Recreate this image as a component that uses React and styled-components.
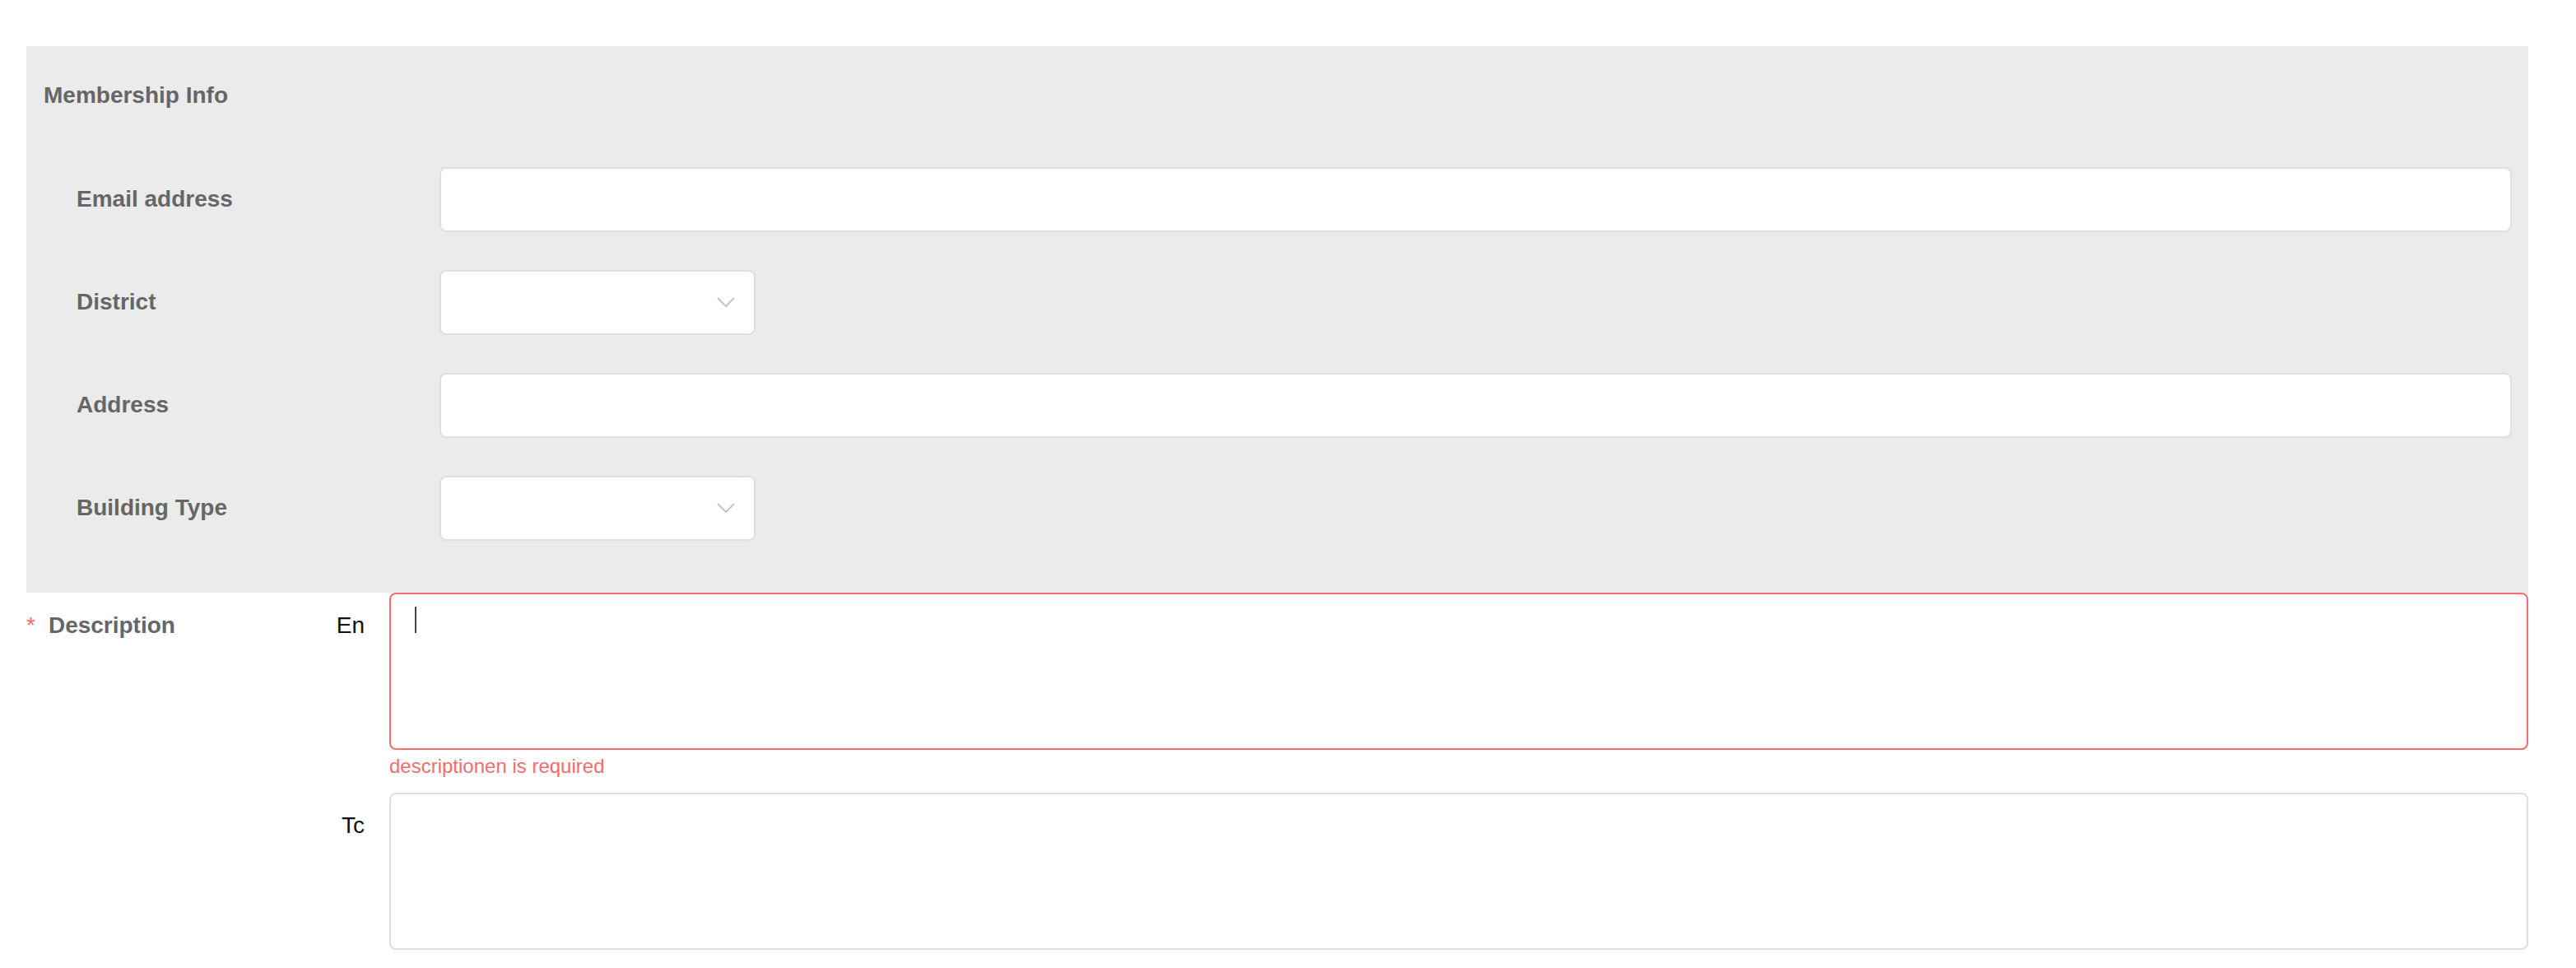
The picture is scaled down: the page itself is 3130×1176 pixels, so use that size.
import React from 'react';
import styled, { createGlobalStyle } from 'styled-components';

const GlobalStyle = createGlobalStyle`
  html, body {
    margin: 0;
    background: #fff;
    font-family: "Liberation Sans", Arial, Helvetica, sans-serif;
  }
  * { box-sizing: border-box; }
`;

const colors = {
  panel: '#ebebeb',
  label: '#666666',
  border: '#dcdfe6',
  error: '#f56c6c',
  arrow: '#c0c4cc',
};

const Page = styled.div`
  padding: 56px 58px 0 32px;
  height: 1176px;
`;

const Panel = styled.section`
  background: ${colors.panel};
  padding: 40px 20px 63px 21px;
`;

const PanelTitle = styled.div`
  font-size: 28px;
  font-weight: 700;
  line-height: 40px;
  color: ${colors.label};
  margin-bottom: 66px;
`;

const Fields = styled.div`
  display: flex;
  flex-direction: column;
  gap: 45px;
  padding-left: 40px;
`;

const FieldRow = styled.div`
  display: flex;
  align-items: center;
  height: 80px;
`;

const FieldLabel = styled.label`
  width: 441px;
  flex-shrink: 0;
  font-size: 28px;
  font-weight: 700;
  color: ${colors.label};
`;

const TextInput = styled.div`
  flex: 1;
  height: 79px;
  background: #fff;
  border: 2px solid ${colors.border};
  border-radius: 8px;
`;

const SelectBox = styled.div`
  width: 384px;
  height: 79px;
  background: #fff;
  border: 2px solid ${colors.border};
  border-radius: 8px;
  display: flex;
  align-items: center;
  justify-content: flex-end;
  padding-right: 23px;
`;

const DescItem = styled.div`
  display: flex;
`;

const MainLabel = styled.div`
  width: 350px;
  flex-shrink: 0;
  font-size: 28px;
  font-weight: 700;
  line-height: 80px;
  color: ${colors.label};
`;

const Required = styled.span`
  color: ${colors.error};
  font-weight: 400;
  margin-right: 16px;
`;

const LangList = styled.div`
  flex: 1;
  display: flex;
  flex-direction: column;
`;

const LangRow = styled.div`
  display: flex;
`;

const LangLabel = styled.div`
  width: 91px;
  flex-shrink: 0;
  text-align: right;
  padding-right: 30px;
  font-size: 28px;
  line-height: 80px;
  color: #111;
`;

const FieldCol = styled.div`
  flex: 1;
  display: flex;
  flex-direction: column;
`;

const TextArea = styled.div`
  height: 191px;
  background: #fff;
  border: 2px solid ${(p) => (p.$error ? colors.error : colors.border)};
  border-radius: 8px;
  padding: 15px 29px;
`;

const Caret = styled.span`
  display: block;
  width: 2px;
  height: 32px;
  background: #444;
`;

const Message = styled.div`
  height: 52px;
  padding-top: 8px;
  font-size: 24px;
  line-height: 24px;
  color: ${colors.error};
`;

const Chevron = () => (
  <svg width="22" height="12" viewBox="0 0 22 12" fill="none">
    <polyline points="1,1 11,11 21,1" stroke={colors.arrow} strokeWidth="2" />
  </svg>
);

const fields = [
  { label: 'Email address', type: 'input' },
  { label: 'District', type: 'select' },
  { label: 'Address', type: 'input' },
  { label: 'Building Type', type: 'select' },
];

const langs = [
  { code: 'En', error: 'descriptionen is required', focused: true },
  { code: 'Tc' },
];

const App = () => (
  <Page>
    <GlobalStyle />
    <Panel>
      <PanelTitle>Membership Info</PanelTitle>
      <Fields>
        {fields.map((f) => (
          <FieldRow key={f.label}>
            <FieldLabel>{f.label}</FieldLabel>
            {f.type === 'select' ? (
              <SelectBox>
                <Chevron />
              </SelectBox>
            ) : (
              <TextInput />
            )}
          </FieldRow>
        ))}
      </Fields>
    </Panel>
    <DescItem>
      <MainLabel>
        <Required>*</Required>
        Description
      </MainLabel>
      <LangList>
        {langs.map((l) => (
          <LangRow key={l.code}>
            <LangLabel>{l.code}</LangLabel>
            <FieldCol>
              <TextArea $error={!!l.error}>{l.focused && <Caret />}</TextArea>
              <Message>{l.error}</Message>
            </FieldCol>
          </LangRow>
        ))}
      </LangList>
    </DescItem>
  </Page>
);

export default App;
